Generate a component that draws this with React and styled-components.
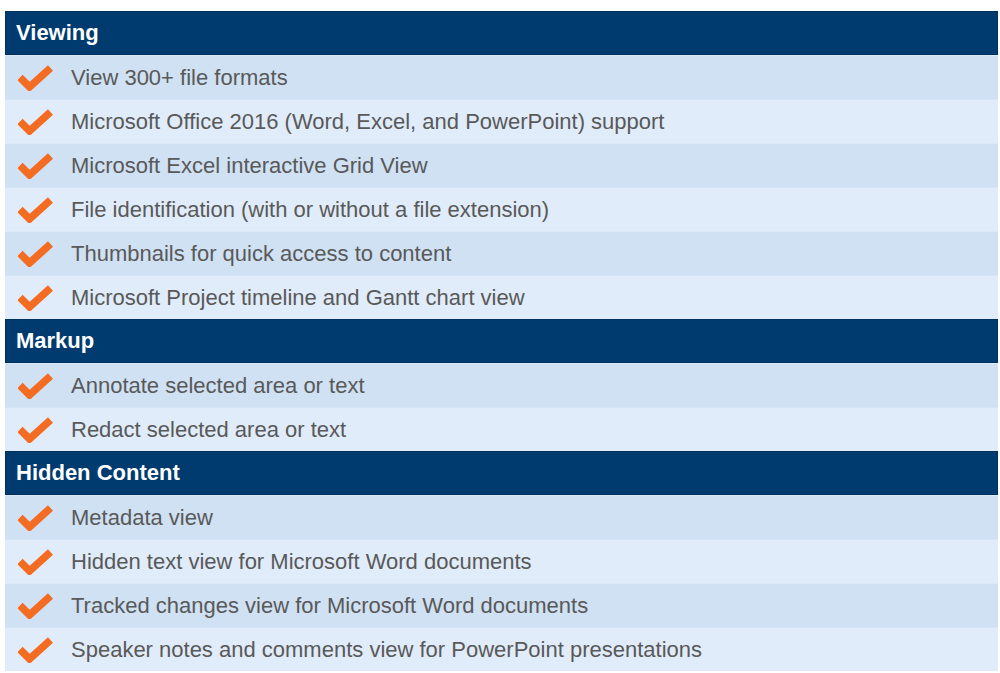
import React from 'react'
import styled, { createGlobalStyle } from 'styled-components'

const GlobalStyle = createGlobalStyle`
  body {
    margin: 0;
    background: #ffffff;
    font-family: 'Liberation Sans', Arial, sans-serif;
  }
`

const Table = styled.div`
  margin: 11px 2px 0 5px;
  width: 993px;
  display: flex;
  flex-direction: column;
`

const Header = styled.div`
  height: 44px;
  box-sizing: border-box;
  background: #003b6f;
  border: 1px solid #00325f;
  color: #ffffff;
  font-weight: bold;
  font-size: 22px;
  display: flex;
  align-items: center;
  padding-left: 10px;
`

const Row = styled.div`
  height: 44px;
  box-sizing: border-box;
  background: ${p => (p.$alt ? '#e0ecf9' : '#cfe1f3')};
  border-top: 1px solid ${p => (p.$alt ? '#d6e5f5' : '#dce9f7')};
  display: flex;
  align-items: center;
  padding-left: 13px;
  gap: 18px;
  color: #595959;
  font-size: 22px;
`

const Check = () => (
  <svg width="35" height="26" viewBox="0 0 35 26">
    <polyline
      points="2,12.5 11.5,22 32.5,3"
      fill="none"
      stroke="#f36c21"
      strokeWidth="7.5"
      strokeLinejoin="miter"
      strokeLinecap="butt"
    />
  </svg>
)

const sections = [
  {
    title: 'Viewing',
    items: [
      'View 300+ file formats',
      'Microsoft Office 2016 (Word, Excel, and PowerPoint) support',
      'Microsoft Excel interactive Grid View',
      'File identification (with or without a file extension)',
      'Thumbnails for quick access to content',
      'Microsoft Project timeline and Gantt chart view',
    ],
  },
  {
    title: 'Markup',
    items: ['Annotate selected area or text', 'Redact selected area or text'],
  },
  {
    title: 'Hidden Content',
    items: [
      'Metadata view',
      'Hidden text view for Microsoft Word documents',
      'Tracked changes view for Microsoft Word documents',
      'Speaker notes and comments view for PowerPoint presentations',
    ],
  },
]

export default function App() {
  return (
    <>
      <GlobalStyle />
      <Table>
        {sections.map(s => (
          <React.Fragment key={s.title}>
            <Header>{s.title}</Header>
            {s.items.map((item, i) => (
              <Row key={item} $alt={i % 2 === 1}>
                <Check />
                {item}
              </Row>
            ))}
          </React.Fragment>
        ))}
      </Table>
    </>
  )
}
